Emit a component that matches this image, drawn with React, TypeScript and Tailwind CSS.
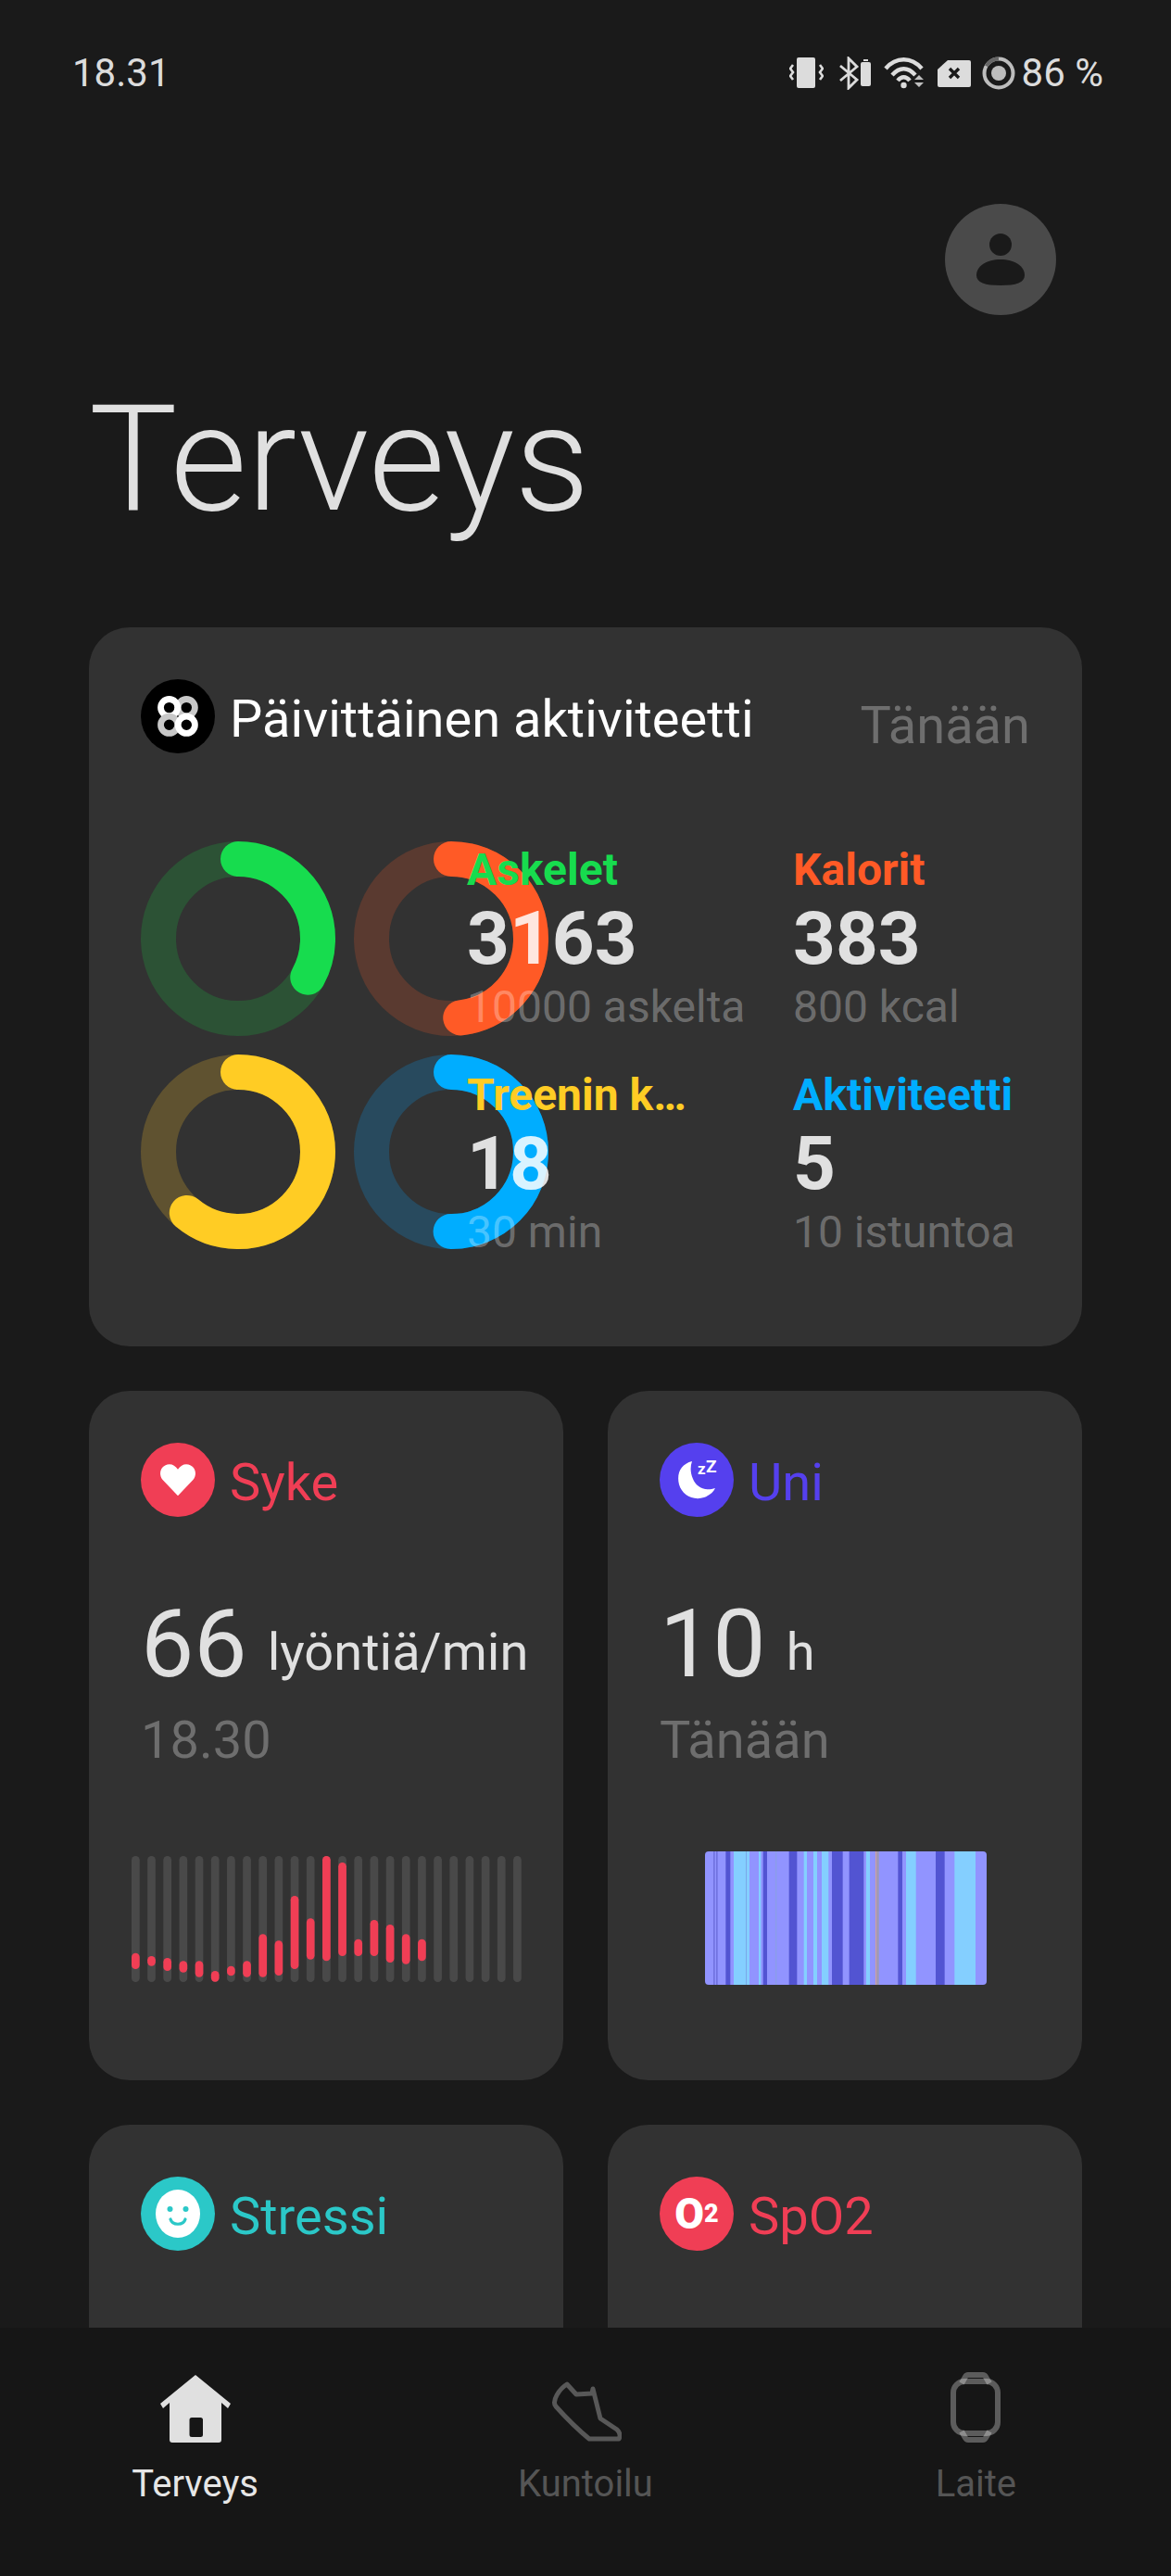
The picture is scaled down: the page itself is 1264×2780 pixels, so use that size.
import React from 'react';

const heartBars: [number, number][] = [
  [410, 462], [420, 452], [426, 468], [436, 473], [436, 488], [468, 503], [452, 484], [436, 488],
  [349, 488], [370, 483], [225, 462], [298, 431], [96, 436], [117, 420], [365, 420], [303, 420],
  [318, 441], [349, 446], [365, 436],
];

const L = '#9194ff';
const D = '#5254d2';
const C = '#84cfff';

// sleep stages, [start, end, colour] in chart units (3x pixels)
const sleepBands: [number, number, string][] = [
  [60, 972, L], [87, 92, '#7072e0'], [96, 101, '#7072e0'], [127, 142, D], [153, 192, C], [192, 195, '#7aa8e8'],
  [195, 204, C], [234, 241, C], [248, 261, D], [288, 292, '#8a9ee8'], [332, 358, D], [380, 390, C],
  [411, 423, C], [438, 460, C], [471, 506, D], [527, 574, D], [582, 594, C], [612, 616, '#d0a09a'],
  [616, 623, '#a09ab0'], [685, 699, D], [711, 743, C], [807, 836, D], [868, 936, C],
];

const Ring = ({ value, color, track }: { value: number; color: string; track: string }) => {
  const r = 86;
  const c = 2 * Math.PI * r;
  return (
    <svg width="210" height="210" viewBox="0 0 210 210" className="block">
      <circle cx="105" cy="105" r={r} fill="none" stroke={track} strokeWidth="38" />
      <circle
        cx="105"
        cy="105"
        r={r}
        fill="none"
        stroke={color}
        strokeWidth="38"
        strokeLinecap="round"
        strokeDasharray={`${c * value} ${c}`}
        transform="rotate(-90 105 105)"
      />
    </svg>
  );
};

const Stat = ({ label, value, goal, color }: { label: string; value: string; goal: string; color: string }) => (
  <div className="flex flex-col">
    <div className={`text-[48px] leading-[56px] font-bold ${color}`}>{label}</div>
    <div className="text-[80px] leading-[92px] font-bold text-white/85">{value}</div>
    <div className="text-[48px] leading-[56px] font-normal text-white/30">{goal}</div>
  </div>
);

const CardHead = ({ icon, bg, title, color }: { icon: React.ReactNode; bg: string; title: string; color: string }) => (
  <div className="flex items-center gap-4">
    <div className={`flex h-20 w-20 shrink-0 items-center justify-center rounded-full ${bg}`}>{icon}</div>
    <span className={`pt-[6px] text-[56px] leading-[64px] font-normal ${color}`}>{title}</span>
  </div>
);

const StatusIcons = () => (
  <div className="flex items-center text-[#dcdcdc]">
    <svg width="37" height="36" viewBox="0 0 37 36" fill="currentColor">
      <rect x="8" y="1" width="20" height="33" rx="2" />
      <path d="M4 9 1 13l3 4-3 4 3 4M33 9l3 4-3 4 3 4-3 4" fill="none" stroke="currentColor" strokeWidth="2.6" />
    </svg>
    <svg width="36" height="36" viewBox="0 0 36 36" className="ml-4">
      <path d="M2 10 20 25 11 34V2l9 9L2 26" fill="none" stroke="currentColor" strokeWidth="2.8" />
      <rect x="24" y="6" width="11" height="26" rx="2" fill="currentColor" />
      <rect x="27" y="3" width="5" height="2" fill="currentColor" />
    </svg>
    <svg width="46" height="36" viewBox="0 0 46 36" className="ml-[13px]">
      <g fill="none" stroke="currentColor" strokeWidth="4.4">
        <path d="M2 13C13 0 30 0 41 13" />
        <path d="M9 20C17 11 26 11 34 20" />
        <path d="M15 26C19 21 24 21 28 26" />
      </g>
      <circle cx="21.5" cy="31" r="3.2" fill="currentColor" />
      <path d="M33 25l5-5 5 5zM33 28h10l-5 5z" fill="currentColor" opacity=".85" />
    </svg>
    <svg width="36" height="30" viewBox="0 0 36 30" className="ml-3">
      <path d="M11 1h23a2 2 0 0 1 2 2v25a2 2 0 0 1-2 2H2a2 2 0 0 1-2-2V11z" fill="currentColor" />
      <path d="M13 10l10 10M23 10 13 20" stroke="#1a1a1a" strokeWidth="3.4" />
    </svg>
    <svg width="36" height="36" viewBox="0 0 36 36" className="ml-3">
      <circle cx="18" cy="18" r="15.5" fill="none" stroke="#bdbdbd" strokeWidth="4" />
      <path d="M4.6 10.2A15.5 15.5 0 0 1 18 2.5" fill="none" stroke="#666" strokeWidth="4" />
      <circle cx="18" cy="18" r="8" fill="#bdbdbd" />
    </svg>
    <span className="ml-[7px] text-[42px] leading-[48px] font-normal">86 %</span>
  </div>
);

const HeartChart = () => (
  <svg width="430" height="136" viewBox="0 0 430 136" className="ml-[-10px] block">
    {Array.from({ length: 25 }).map((_, i) => (
      <rect key={i} x={i * 17.17} y="0" width="8.7" height="136" rx="4.35" fill="#494949" />
    ))}
    {heartBars.map(([top, bottom], i) => (
      <rect
        key={i}
        x={i * 17.17}
        y={(top - 96) / 3}
        width="8.7"
        height={(bottom - top) / 3}
        rx="4.35"
        fill="#f03e55"
      />
    ))}
  </svg>
);

const SleepChart = () => (
  <svg width="304" height="144" viewBox="60 0 912 432" className="block">
    <defs>
      <clipPath id="sleep-clip">
        <rect x="60" y="0" width="912" height="432" rx="12" />
      </clipPath>
    </defs>
    <g clipPath="url(#sleep-clip)">
      {sleepBands.map(([a, b, fill], i) => (
        <rect key={i} x={a} y="0" width={b - a} height="432" fill={fill} />
      ))}
    </g>
  </svg>
);

const NavItem = ({ icon, label, active }: { icon: React.ReactNode; label: string; active?: boolean }) => (
  <div className="flex flex-col items-center">
    <div className="flex h-[76px] items-end">{icon}</div>
    <span className={`mt-[22px] text-[40px] leading-[46px] ${active ? 'text-[#e6e6e6]' : 'text-[#555555]'}`}>{label}</span>
  </div>
);

export default function App() {
  return (
    <div className="flex h-[2780px] w-[1264px] flex-col overflow-hidden bg-[#1a1a1a] font-['Roboto',sans-serif]">
      <div className="flex-1 overflow-hidden">
        {/* status bar */}
        <div className="flex items-center justify-between pt-[55px] pr-[73px] pl-[78px]">
          <span className="text-[42px] leading-[48px] font-normal text-[#dcdcdc]">18.31</span>
          <StatusIcons />
        </div>

        {/* header */}
        <div className="mt-[117px] flex justify-end pr-[124px]">
          <div className="flex h-[120px] w-[120px] items-center justify-center rounded-full bg-[#4a4a4a]">
            <svg width="52" height="56" viewBox="0 0 52 56" fill="#1a1a1a">
              <ellipse cx="26" cy="12" rx="12" ry="12" />
              <path d="M26 28C11 28 0 35 0 45c0 8 9 11 26 11s26-3 26-11c0-10-11-17-26-17z" />
            </svg>
          </div>
        </div>
        <h1 className="mt-[62px] ml-[96px] text-[160px] leading-[188px] font-light text-[#e0e0e0]">Terveys</h1>

        <div className="mt-[87px] flex flex-col gap-12 px-24">
          {/* daily activity */}
          <div className="h-[776px] rounded-[44px] bg-[#323232] px-14 pt-14">
            <div className="flex h-20 items-start justify-between">
              <div className="flex items-center gap-4">
                <div className="flex h-20 w-20 items-center justify-center rounded-full bg-black">
                  <svg width="44" height="44" viewBox="0 0 44 44" fill="none" strokeWidth="6.8">
                    <circle cx="12.6" cy="12.600" r="9.100" stroke="#c8c8c8" transform="translate(18.7 0)" />
                    <circle cx="12.6" cy="12.600" r="9.100" stroke="#fff" />
                    <circle cx="12.6" cy="31.300" r="9.100" stroke="#c8c8c8" />
                    <circle cx="31.3" cy="31.300" r="9.100" stroke="#fff" />
                  </svg>
                </div>
                <span className="pt-[6px] text-[56px] leading-[64px] text-white">Päivittäinen aktiviteetti</span>
              </div>
              <span className="mt-[18px] text-[56px] leading-[64px] font-normal text-[#6e6e6e]">Tänään</span>
            </div>

            <div className="mt-[95px] grid">
              <div className="col-start-1 row-start-1 grid w-fit grid-cols-[210px_210px] gap-x-5 gap-y-5 self-start">
                <Ring value={0.33} color="#17dc4e" track="#2c5235" />
                <Ring value={0.48} color="#ff5a26" track="#5a3a30" />
                <Ring value={0.61} color="#ffcc24" track="#5f5230" />
                <Ring value={0.5} color="#00adff" track="#284a5e" />
              </div>
              <div className="col-start-1 row-start-1 grid grid-cols-[352px_1fr] content-start gap-y-[39px] pt-[3px] pl-[352px]">
                <Stat label="Askelet" value="3163" goal="10000 askelta" color="text-[#17dc4e]" />
                <Stat label="Kalorit" value="383" goal="800 kcal" color="text-[#ff5a26]" />
                <Stat label="Treenin k…" value="18" goal="30 min" color="text-[#ffcc24]" />
                <Stat label="Aktiviteetti" value="5" goal="10 istuntoa" color="text-[#00adff]" />
              </div>
            </div>
          </div>

          <div className="grid grid-cols-2 gap-12">
            {/* heart rate */}
            <div className="h-[744px] rounded-[44px] bg-[#323232] px-14 pt-14">
              <CardHead
                bg="bg-[#f03e55]"
                title="Syke"
                color="text-[#f03e55]"
                icon={
                  <svg width="38" height="36" viewBox="0 0 44 40" fill="#fff">
                    <path d="M22 40 3 20C-2 14-.5 5 6 2c6-3 12-1 16 5 4-6 10-8 16-5 6.500 3 8 12 3 18z" />
                  </svg>
                }
              />
              <div className="mt-[81px] flex items-baseline gap-[22px] text-[#e0e0e0]">
                <span className="text-[102px] leading-[112px] font-normal">66</span>
                <span className="-translate-y-[7px] text-[56px] leading-[64px] font-normal whitespace-nowrap">lyöntiä/min</span>
              </div>
              <div className="mt-[16px] text-[56px] leading-[64px] font-normal text-[#6e6e6e]">18.30</div>
              <div className="mt-[93px]">
                <HeartChart />
              </div>
            </div>

            {/* sleep */}
            <div className="h-[744px] rounded-[44px] bg-[#323232] px-14 pt-14">
              <CardHead
                bg="bg-[#5540ee]"
                title="Uni"
                color="text-[#5540ee]"
                icon={
                  <div className="relative h-20 w-20">
                    <svg width="80" height="80" viewBox="-1 -3 80 80" fill="#fff">
                      <path d="M34 17C22 20 17 30 20 42c3 11 15 18 27 14 6-2 10-6 12-10-12 4-21-2-24-10-3-7-3-13-1-19z" />
                    </svg>
                    <span className="absolute top-[20px] left-[41px] text-[17px] leading-4 font-bold text-white">z</span>
                    <span className="absolute top-[16px] left-[50px] text-[19px] leading-5 font-bold text-white">Z</span>
                  </div>
                }
              />
              <div className="mt-[81px] flex items-baseline gap-[22px] text-[#e0e0e0]">
                <span className="text-[102px] leading-[112px] font-normal">10</span>
                <span className="-translate-y-[7px] text-[56px] leading-[64px] font-normal">h</span>
              </div>
              <div className="mt-[16px] text-[56px] leading-[64px] font-normal text-[#6e6e6e]">Tänään</div>
              <div className="mt-[88px] ml-[49px]">
                <SleepChart />
              </div>
            </div>
          </div>

          <div className="grid grid-cols-2 gap-12">
            <div className="h-[400px] rounded-[44px] bg-[#323232] px-14 pt-14">
              <CardHead
                bg="bg-[#2bc8c8]"
                title="Stressi"
                color="text-[#2bc8c8]"
                icon={
                  <svg width="48" height="52" viewBox="0 0 48 52">
                    <ellipse cx="24" cy="26" rx="24" ry="26" fill="#fff" />
                    <circle cx="15.500" cy="21" r="3" fill="#2bc8c8" />
                    <circle cx="32.500" cy="21" r="3" fill="#2bc8c8" />
                    <path d="M16 32c2 7 14 7 16 0" fill="none" stroke="#2bc8c8" strokeWidth="3.200" strokeLinecap="round" />
                  </svg>
                }
              />
            </div>
            <div className="h-[400px] rounded-[44px] bg-[#323232] px-14 pt-14">
              <CardHead
                bg="bg-[#f03e55]"
                title="SpO2"
                color="text-[#f03e55]"
                icon={
                  <span className="flex items-center font-black text-white">
                    <span className="text-[46px] leading-none">O</span>
                    <span className="text-[27px] leading-none">2</span>
                  </span>
                }
              />
            </div>
          </div>
        </div>
      </div>

      {/* bottom nav */}
      <div className="grid h-[268px] shrink-0 grid-cols-3 bg-[#161616] pt-[48px]">
        <NavItem
          active
          label="Terveys"
          icon={
            <svg width="76" height="73" viewBox="0 0 76 73">
              <path
                fillRule="evenodd"
                d="M38 0 76 31l-3 5-7-6v40a3 3 0 0 1-3 3H13a3 3 0 0 1-3-3V30l-7 6-3-5zM34 46a2.500 2.500 0 0 0-2.500 2.500v16A2.500 2.500 0 0 0 34 67h9.500a2.500 2.500 0 0 0 2.500-2.500v-16a2.500 2.500 0 0 0-2.500-2.500z"
                fill="#e0e0e0"
              />
            </svg>
          }
        />
        <NavItem
          label="Kuntoilu"
          icon={
            <svg width="78" height="66" viewBox="0 0 78 66" fill="none" stroke="#585858" strokeWidth="5" strokeLinejoin="round">
              <path d="M19 3 29 14l17-1 1-5 8 32 18 12c3 3 4 7 2 10H43C32 53 16 37 7 27 2 21 11 8 19 3z" />
            </svg>
          }
        />
        <NavItem
          label="Laite"
          icon={
            <svg width="54" height="76" viewBox="0 0 54 76" fill="none" stroke="#fff" strokeOpacity=".3" strokeWidth="6">
              <rect x="3" y="10" width="48" height="56" rx="12" />
              <path d="M12 12l4-7q1-2 3-2h16q2 0 3 2l4 7" />
              <path d="M12 64l4 7q1 2 3 2h16q2 0 3-2l4-7" />
            </svg>
          }
        />
      </div>
    </div>
  );
}
